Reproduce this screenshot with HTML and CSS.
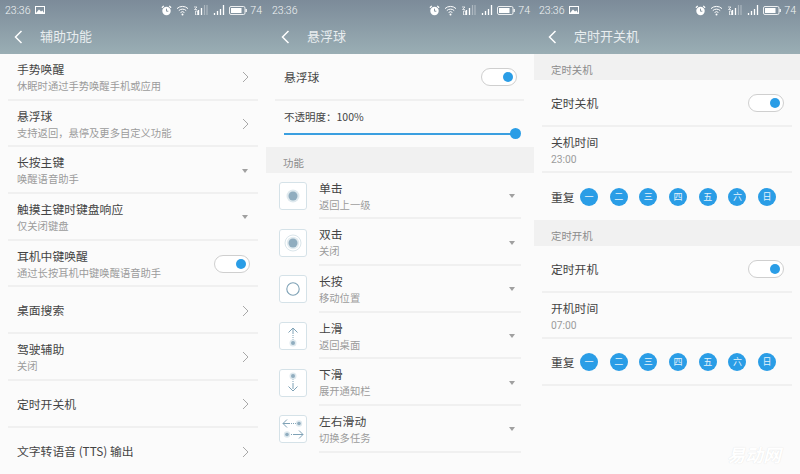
FILE: index.html
```html
<!DOCTYPE html>
<html lang="zh-CN">
<head>
  <meta charset="UTF-8" />
  <title>辅助功能</title>
  <link rel="stylesheet" href="styles.css">
</head>
<body>
  <svg class="defs" width="0" height="0">
    <symbol id="i-alarm" viewBox="0 0 12 12">
      <circle cx="6" cy="6.5" r="4.6" fill="#fff"/>
      <path d="M6 4v2.800h2" fill="none" stroke="#7f8e9a" stroke-width="1"/>
      <path d="M1 3 3 1M11 3 9 1" stroke="#fff" stroke-width="1.400"/>
    </symbol>
    <symbol id="i-wifi" viewBox="0 0 13 11">
      <path d="M1 3.600a8 8 0 0 1 11 0M2.800 5.600a5.400 5.400 0 0 1 7.400 0M4.600 7.500a2.800 2.800 0 0 1 3.800 0" fill="none" stroke="#fff" stroke-width="1"/>
      <circle cx="6.500" cy="9.600" r="1" fill="#fff"/>
    </symbol>
    <symbol id="i-sig" viewBox="0 0 13 10">
      <path d="M1.500 10V8M4.500 10V6M7.500 10V4M10.500 10V0" stroke="#fff" stroke-width="1.300"/>
    </symbol>
    <symbol id="i-sig2" viewBox="0 0 14 10">
      <path d="M4.500 10V5M7.500 10V3" stroke="#fff" stroke-width="1.300"/>
      <path d="M10.500 10V0M13 10V0" stroke="#fff" stroke-opacity=".35" stroke-width="1.200"/>
      <path d="M0 2h3L.5 4.500H3M1.500 6h2v4h-2z" fill="none" stroke="#fff" stroke-width=".7"/>
    </symbol>
    <symbol id="i-batt" viewBox="0 0 18 9">
      <rect x=".5" y=".5" width="15.500" height="8" rx="1.500" fill="none" stroke="#fff" stroke-opacity=".85"/>
      <rect x="2" y="2" width="10.500" height="5" fill="#fff"/>
      <rect x="16.500" y="3" width="1.300" height="3" fill="#fff"/>
    </symbol>
    <symbol id="i-pic" viewBox="0 0 10 8">
      <rect x=".5" y=".5" width="9" height="7" fill="none" stroke="#fff"/>
      <path d="M1 7 4 3.500 6 5.500 7.500 4.500 9 7z" fill="#fff"/>
    </symbol>
    <symbol id="i-back" viewBox="0 0 9 14">
      <path d="M7.500 1 1.500 7l6 6" fill="none" stroke="#fff" stroke-width="1.500"/>
    </symbol>
    <symbol id="i-next" viewBox="0 0 7 12">
      <path d="M1 1l5 5-5 5" fill="none" stroke="#a8a8a8" stroke-width="1"/>
    </symbol>
  </svg>

  <section class="screen screen-a">
    <header class="topbar">
      <div class="status">
        <span>23:36</span>
        <svg class="st-pic"><use href="#i-pic"/></svg>
        <span class="spacer"></span>
        <svg class="st-alarm"><use href="#i-alarm"/></svg>
        <svg class="st-wifi"><use href="#i-wifi"/></svg>
        <svg class="st-sig2"><use href="#i-sig2"/></svg>
        <svg class="st-sig"><use href="#i-sig"/></svg>
        <svg class="st-batt"><use href="#i-batt"/></svg>
        <span>74</span>
      </div>
      <div class="nav">
        <svg class="back"><use href="#i-back"/></svg>
        <span>辅助功能</span>
      </div>
    </header>
    <div class="row"><div class="grow"><div class="name">手势唤醒</div><div class="sub">休眠时通过手势唤醒手机或应用</div></div><svg class="next"><use href="#i-next"/></svg></div>
    <div class="row"><div class="grow"><div class="name">悬浮球</div><div class="sub">支持返回，悬停及更多自定义功能</div></div><svg class="next"><use href="#i-next"/></svg></div>
    <div class="row"><div class="grow"><div class="name">长按主键</div><div class="sub">唤醒语音助手</div></div><i class="drop"></i></div>
    <div class="row"><div class="grow"><div class="name">触摸主键时键盘响应</div><div class="sub">仅关闭键盘</div></div><i class="drop"></i></div>
    <div class="row"><div class="grow"><div class="name">耳机中键唤醒</div><div class="sub">通过长按耳机中键唤醒语音助手</div></div><span class="toggle"></span></div>
    <div class="row"><div class="grow"><div class="name">桌面搜索</div></div><svg class="next"><use href="#i-next"/></svg></div>
    <div class="row"><div class="grow"><div class="name">驾驶辅助</div><div class="sub">关闭</div></div><svg class="next"><use href="#i-next"/></svg></div>
    <div class="row"><div class="grow"><div class="name">定时开关机</div></div><svg class="next"><use href="#i-next"/></svg></div>
    <div class="row last"><div class="grow"><div class="name">文字转语音 (TTS) 输出</div></div><svg class="next"><use href="#i-next"/></svg></div>
  </section>

  <section class="screen screen-b">
    <header class="topbar">
      <div class="status">
        <span>23:36</span>
        <span class="spacer"></span>
        <svg class="st-alarm"><use href="#i-alarm"/></svg>
        <svg class="st-wifi"><use href="#i-wifi"/></svg>
        <svg class="st-sig2"><use href="#i-sig2"/></svg>
        <svg class="st-sig"><use href="#i-sig"/></svg>
        <svg class="st-batt"><use href="#i-batt"/></svg>
        <span>74</span>
      </div>
      <div class="nav">
        <svg class="back"><use href="#i-back"/></svg>
        <span>悬浮球</span>
      </div>
    </header>
    <div class="row"><div class="grow"><div class="name">悬浮球</div></div><span class="toggle"></span></div>
    <div class="opacity">
      <div class="op-label">不透明度：100%</div>
      <div class="slider"><span class="knob"></span></div>
    </div>
    <div class="band">功能</div>
    <div class="gesture">
      <svg class="g-icon" viewBox="0 0 28 28"><rect x=".5" y=".5" width="27" height="27" rx="2.500" fill="#fff" stroke="#d5e2e8"/><circle cx="14" cy="14" r="6.500" fill="#dfe9ee"/><circle cx="14" cy="14" r="4.500" fill="#90adbf"/></svg>
      <div class="g-body"><div class="grow"><div class="name">单击</div><div class="sub">返回上一级</div></div><i class="drop"></i></div>
    </div>
    <div class="gesture">
      <svg class="g-icon" viewBox="0 0 28 28"><rect x=".5" y=".5" width="27" height="27" rx="2.500" fill="#fff" stroke="#d5e2e8"/><circle cx="14" cy="14" r="8" fill="none" stroke="#dbe6eb"/><circle cx="14" cy="14" r="6.200" fill="#e3ecf0"/><circle cx="14" cy="14" r="4.500" fill="#90adbf"/></svg>
      <div class="g-body"><div class="grow"><div class="name">双击</div><div class="sub">关闭</div></div><i class="drop"></i></div>
    </div>
    <div class="gesture">
      <svg class="g-icon" viewBox="0 0 28 28"><rect x=".5" y=".5" width="27" height="27" rx="2.500" fill="#fff" stroke="#d5e2e8"/><circle cx="14" cy="14" r="6.200" fill="none" stroke="#7fa2b6" stroke-width="1.100"/></svg>
      <div class="g-body"><div class="grow"><div class="name">长按</div><div class="sub">移动位置</div></div><i class="drop"></i></div>
    </div>
    <div class="gesture">
      <svg class="g-icon" viewBox="0 0 28 28"><rect x=".5" y=".5" width="27" height="27" rx="2.500" fill="#fff" stroke="#d5e2e8"/><path d="M14 6v12" stroke="#7fa2b6" stroke-dasharray="6 1 1 1 1 1"/><path d="M9.500 10.500 14 6l4.500 4.500" fill="none" stroke="#7fa2b6"/><circle cx="14" cy="21" r="3.500" fill="#dfe9ee"/><circle cx="14" cy="21" r="2" fill="#90adbf"/></svg>
      <div class="g-body"><div class="grow"><div class="name">上滑</div><div class="sub">返回桌面</div></div><i class="drop"></i></div>
    </div>
    <div class="gesture">
      <svg class="g-icon" viewBox="0 0 28 28"><rect x=".5" y=".5" width="27" height="27" rx="2.500" fill="#fff" stroke="#d5e2e8"/><path d="M14 10v12" stroke="#7fa2b6" stroke-dasharray="1 1 1 1 6"/><path d="M9.500 17.500 14 22l4.500-4.500" fill="none" stroke="#7fa2b6"/><circle cx="14" cy="7" r="3.500" fill="#dfe9ee"/><circle cx="14" cy="7" r="2" fill="#90adbf"/></svg>
      <div class="g-body"><div class="grow"><div class="name">下滑</div><div class="sub">展开通知栏</div></div><i class="drop"></i></div>
    </div>
    <div class="gesture">
      <svg class="g-icon" viewBox="0 0 28 28"><rect x=".5" y=".5" width="27" height="27" rx="2.500" fill="#fff" stroke="#d5e2e8"/><path d="M4 8.500h16" stroke="#7fa2b6" stroke-dasharray="7 1 1 1 1 1"/><path d="M8 4.500l-4 4 4 4" fill="none" stroke="#7fa2b6"/><circle cx="20" cy="8.500" r="3.200" fill="#dfe9ee"/><circle cx="20" cy="8.500" r="1.800" fill="#90adbf"/><path d="M8 19.500h16" stroke="#7fa2b6" stroke-dasharray="1 1 1 1 1 1 10"/><path d="M20 15.500l4 4-4 4" fill="none" stroke="#7fa2b6"/><circle cx="8" cy="19.500" r="3.200" fill="#dfe9ee"/><circle cx="8" cy="19.500" r="1.800" fill="#90adbf"/></svg>
      <div class="g-body"><div class="grow"><div class="name">左右滑动</div><div class="sub">切换多任务</div></div><i class="drop"></i></div>
    </div>
  </section>

  <section class="screen screen-c">
    <header class="topbar">
      <div class="status">
        <span>23:36</span>
        <svg class="st-pic"><use href="#i-pic"/></svg>
        <span class="spacer"></span>
        <svg class="st-alarm"><use href="#i-alarm"/></svg>
        <svg class="st-wifi"><use href="#i-wifi"/></svg>
        <svg class="st-sig2"><use href="#i-sig2"/></svg>
        <svg class="st-sig"><use href="#i-sig"/></svg>
        <svg class="st-batt"><use href="#i-batt"/></svg>
        <span>74</span>
      </div>
      <div class="nav">
        <svg class="back"><use href="#i-back"/></svg>
        <span>定时开关机</span>
      </div>
    </header>
    <div class="band">定时关机</div>
    <div class="row"><div class="grow"><div class="name">定时关机</div></div><span class="toggle"></span></div>
    <div class="row"><div class="grow"><div class="name">关机时间</div><div class="sub">23:00</div></div></div>
    <div class="row repeat flush">
      <span class="name">重复</span>
      <div class="days"><b>一</b><b>二</b><b>三</b><b>四</b><b>五</b><b>六</b><b>日</b></div>
    </div>
    <div class="band">定时开机</div>
    <div class="row"><div class="grow"><div class="name">定时开机</div></div><span class="toggle"></span></div>
    <div class="row"><div class="grow"><div class="name">开机时间</div><div class="sub">07:00</div></div></div>
    <div class="row repeat">
      <span class="name">重复</span>
      <div class="days"><b>一</b><b>二</b><b>三</b><b>四</b><b>五</b><b>六</b><b>日</b></div>
    </div>
    <div class="watermark">易动网</div>
  </section>
</body>
</html>
```

FILE: styles.css
```css
body {
  margin: 0;
  width: 800px;
  height: 474px;
  display: flex;
  overflow: hidden;
  background-color: #fafafa;
  font-family: "Noto Sans CJK SC", sans-serif;
  color: #333;
}

.defs {
  position: absolute;
}

.screen {
  position: relative;
  flex: none;
  height: 474px;
  overflow: hidden;
  background-color: #fbfbfb;
}

.screen-a { width: 266px; }
.screen-b { width: 268px; }
.screen-c { width: 266px; }

.topbar {
  height: 54px;
  background: linear-gradient(#7c8b99, #9aaeb4);
  color: #fff;
}

.status {
  height: 18px;
  padding: 1px 4px 0 5px;
  display: flex;
  align-items: center;
  gap: 3px;
  font-family: Roboto, sans-serif;
  font-size: 10.5px;
  font-weight: 300;
  color: #f2f4f5;
}

.screen-b .status { padding-left: 6px; }

.spacer { flex: 1; }

.st-pic { width: 10px; height: 8px; margin-left: 1px; }
.st-alarm { width: 11px; height: 11px; }
.st-wifi { width: 13px; height: 11px; margin-left: 1px; }
.st-sig2 { width: 14px; height: 10px; margin-left: 2px; }
.st-sig { width: 13px; height: 10px; margin-left: 2px; }
.st-batt { width: 18px; height: 9px; }

.nav {
  box-sizing: border-box;
  height: 36px;
  padding: 0 0 3px 14px;
  display: flex;
  align-items: center;
  gap: 17px;
  font-size: 13px;
  color: #e8edef;
}

.screen-b .nav { padding-left: 15px; }

.back { width: 9px; height: 14px; margin-top: 2px; }

.row {
  box-sizing: border-box;
  height: 46.7px;
  margin: 0 8px;
  padding: 0 8px 0 9px;
  display: flex;
  align-items: center;
  border-bottom: 2px solid #f0f0f0;
}

.screen-b .row {
  margin: 0 10px 0 9px;
  padding-right: 7px;
}

.row.last, .row.flush { border-bottom: 0; }

.grow { flex: 1; }

.name {
  font-size: 11.8px;
  line-height: 17px;
  color: #444;
}

.sub {
  margin: 3px 0 -1px;
  font-family: Roboto, "Noto Sans CJK SC", sans-serif;
  font-size: 10.3px;
  line-height: 14px;
  color: #9c9c9c;
}

.next {
  width: 7px;
  height: 12px;
  margin: 2px 1px 0 0;
}

.drop {
  width: 0;
  height: 0;
  margin: 2px 2px 0 0;
  border-left: 3px solid transparent;
  border-right: 3px solid transparent;
  border-top: 4px solid #a0a0a0;
}

.toggle {
  box-sizing: border-box;
  position: relative;
  width: 36px;
  height: 18px;
  margin-top: 2px;
  border: 1px solid #cfcfcf;
  border-radius: 9px;
  background-color: #fff;
}

.toggle::after {
  content: "";
  position: absolute;
  top: 3px;
  right: 3px;
  width: 10px;
  height: 10px;
  border-radius: 50%;
  background-color: #2a9de6;
}

.opacity {
  height: 46px;
  padding: 0 19px 0 18px;
}

.op-label {
  padding-top: 8px;
  font-size: 10.5px;
  line-height: 16px;
  color: #444;
}

.slider {
  position: relative;
  height: 2px;
  margin-top: 8px;
  background-color: #3a9fe0;
}

.knob {
  position: absolute;
  top: -4.5px;
  right: -6px;
  width: 11px;
  height: 11px;
  border-radius: 50%;
  background-color: #2a9de6;
}

.band {
  box-sizing: border-box;
  height: 26px;
  padding: 8px 0 0 17px;
  background-color: #f1f1f1;
  font-size: 10.4px;
  line-height: 16px;
  color: #8c8c8c;
}

.gesture {
  height: 46.7px;
  padding-left: 13px;
  display: flex;
  align-items: center;
  gap: 12px;
}

.g-icon {
  flex: none;
  width: 28px;
  height: 28px;
}

.g-body {
  box-sizing: border-box;
  flex: 1;
  height: 100%;
  margin-right: 13px;
  padding-right: 4px;
  display: flex;
  align-items: center;
  border-bottom: 2px solid #f0f0f0;
}

.repeat .name {
  width: 29px;
  flex: none;
}

.days {
  display: flex;
  gap: 11.7px;
}

.days b {
  width: 18px;
  height: 18px;
  border-radius: 50%;
  background-color: #2a9de6;
  color: #e6f3fc;
  font-size: 9px;
  font-weight: 400;
  line-height: 18px;
  text-align: center;
}

.watermark {
  position: absolute;
  right: 19px;
  bottom: 7px;
  font-size: 18px;
  font-style: italic;
  font-weight: 700;
  color: #fff;
  text-shadow: 0 0 1px #ddd;
}
```
